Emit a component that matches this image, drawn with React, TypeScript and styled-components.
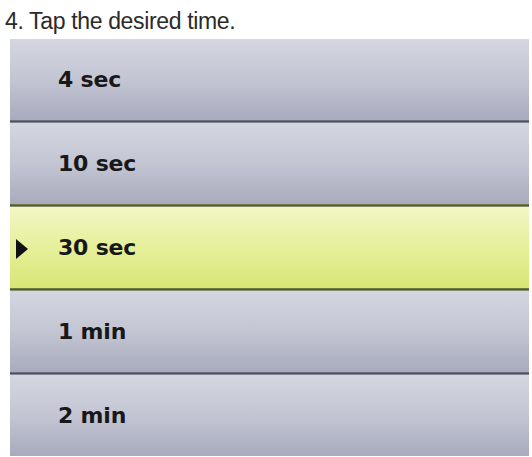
import React from 'react'
import styled, { createGlobalStyle } from 'styled-components'

const GlobalStyle = createGlobalStyle`
  html, body {
    margin: 0;
    padding: 0;
    background: #ffffff;
  }
`

const Page = styled.div`
  width: 532px;
  height: 457px;
  overflow: hidden;
  background: #ffffff;
`

const Title = styled.div`
  height: 36px;
  padding: 3px 0 0 5px;
  line-height: 36px;
  font-family: "Liberation Sans", Arial, sans-serif;
  font-size: 23px;
  color: #2a2a2a;
  letter-spacing: -0.35px;
`

const List = styled.div`
  margin-left: 10px;
  width: 519px;
  display: flex;
  flex-direction: column;
`

const Row = styled.div<{ $active?: boolean }>`
  position: relative;
  height: 81px;
  display: flex;
  align-items: center;
  padding-left: 48px;
  background: ${p => p.$active
    ? 'linear-gradient(#f1f7c6 0%, #e7f09e 45%, #d9e676 100%)'
    : 'linear-gradient(#d4d6e1 0%, #c3c5d3 50%, #a8abbd 100%)'};
`

const Separator = styled.div<{ $active?: boolean }>`
  height: 3px;
  background: ${p => p.$active
    ? 'linear-gradient(#7d8a4c, #4f5a33, #a3a98a)'
    : 'linear-gradient(#7e818e, #4c505c, #9c9fad)'};
`

const Label = styled.span`
  font-family: "DejaVu Sans", Verdana, sans-serif;
  font-weight: bold;
  font-size: 22px;
  color: #181818;
  letter-spacing: -0.2px;
`

const Marker = styled.svg`
  position: absolute;
  left: 5px;
  top: 50%;
  margin-top: -10px;
`

const times = ['4 sec', '10 sec', '30 sec', '1 min', '2 min']
const selected = '30 sec'

export default function App() {
  return (
    <>
      <GlobalStyle />
      <Page>
        <Title>4. Tap the desired time.</Title>
        <List>
          {times.map((t, i) => {
            const active = t === selected
            const nextActive = times[i + 1] === selected
            return (
              <React.Fragment key={t}>
                <Row $active={active}>
                  {active && (
                    <Marker width="14" height="22" viewBox="0 0 14 22">
                      <polygon points="1,1 13,11 1,21" fill="#111" />
                    </Marker>
                  )}
                  <Label>{t}</Label>
                </Row>
                {i < times.length - 1 && <Separator $active={active || nextActive} />}
              </React.Fragment>
            )
          })}
        </List>
      </Page>
    </>
  )
}
